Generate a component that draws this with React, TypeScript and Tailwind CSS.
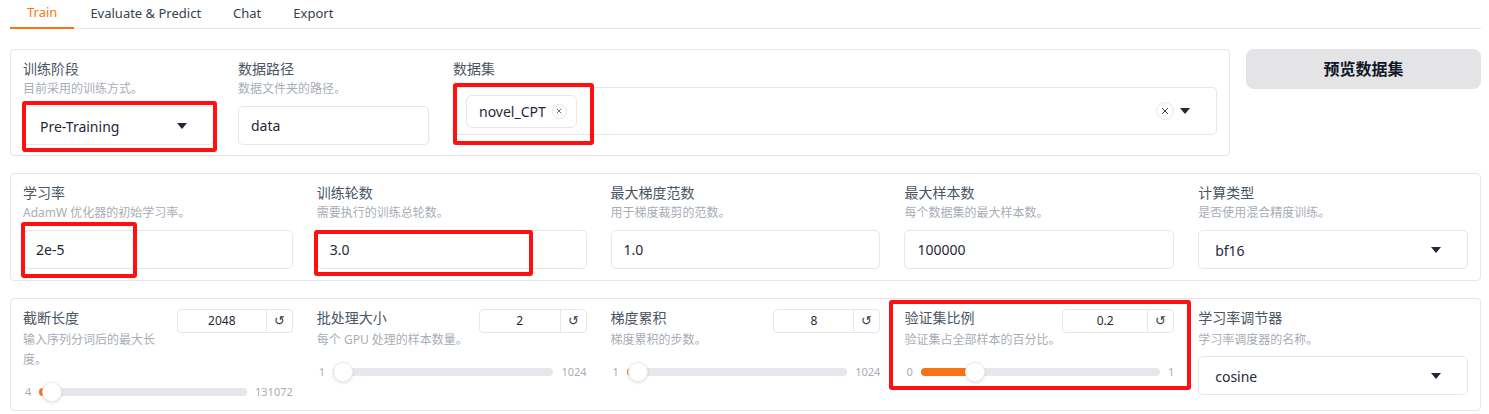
import React from 'react';

const FONT = { fontFamily: '"Noto Sans", "Noto Sans CJK SC", sans-serif' };

const Label: React.FC<{ text: string }> = ({ text }) => (
  <div className="text-[14px] leading-5 text-[#4b5563]">{text}</div>
);

const Info: React.FC<{ text: string }> = ({ text }) => (
  <div className="text-[12px] leading-5 text-[#a8adb6]">{text}</div>
);

const Caret = () => (
  <svg width="10" height="6" viewBox="0 0 10 6" className="shrink-0">
    <path d="M0 0 L10 0 L5 6 Z" fill="#1f2937" />
  </svg>
);

const CrossIcon: React.FC<{ size: number }> = ({ size }) => (
  <svg width={size} height={size} viewBox="0 0 8 8">
    <path d="M1 1 L7 7 M7 1 L1 7" stroke="#374151" strokeWidth="1" />
  </svg>
);

const TextBox: React.FC<{ value: string; dropdown?: boolean; className?: string }> = ({ value, dropdown, className }) => (
  <div
    className={`h-[39px] border border-[#e5e7eb] rounded-[5px] bg-white flex items-center justify-between pl-[12px] pr-[26px] text-[14px] text-[#1f2937] ${className ?? ''}`}
  >
    <span className={dropdown ? 'pl-[4px] pt-[2px]' : ''}>{value}</span>
    {dropdown && <Caret />}
  </div>
);

const NumberBox: React.FC<{ value: string; width: string }> = ({ value, width }) => (
  <div className={`mt-[1px] ${width} h-[24px] border border-[#e5e7eb] rounded-[4px] flex text-[12px] text-[#1f2937] shrink-0`}>
    <div className="flex-1 flex items-center justify-center">{value}</div>
    <div className="w-[26px] border-l border-[#e5e7eb] flex items-center justify-center text-[13px] text-[#374151]">↺</div>
  </div>
);

const Slider: React.FC<{ min: string; max: string; pct: number }> = ({ min, max, pct }) => (
  <div className="h-[20px] flex items-center gap-[8px] text-[11px] text-[#a8adb6]">
    <span className="pl-[2px]">{min}</span>
    <div className="relative flex-1 h-[20px]">
      <div className="absolute left-0 right-0 top-[6px] h-[8px] rounded-full bg-[#e5e7eb]" />
      <div
        className="absolute left-0 top-[6px] h-[8px] rounded-full bg-[#f97316]"
        style={{ width: `calc(${pct} * (100% - 20px) + 10px)` }}
      />
      <div
        className="absolute top-0 w-[20px] h-[20px] rounded-full bg-white border border-[#eeeeee] shadow-[0_1px_3px_rgba(0,0,0,0.15)]"
        style={{ left: `calc(${pct} * (100% - 20px))` }}
      />
    </div>
    <span>{max}</span>
  </div>
);

const SliderField: React.FC<{
  label: string;
  info: string;
  value: string;
  min: string;
  max: string;
  pct: number;
  boxWidth: string;
}> = ({ label, info, value, min, max, pct, boxWidth }) => (
  <div className="flex-1 min-w-0">
    <div className="flex items-start">
      <div className="flex-1 min-w-0">
        <Label text={label} />
        <div className="mt-[2px]">
          <Info text={info} />
        </div>
      </div>
      <NumberBox value={value} width={boxWidth} />
    </div>
    <div className="mt-[12px]">
      <Slider min={min} max={max} pct={pct} />
    </div>
  </div>
);

const Field: React.FC<{ label: string; info: string; value: string; dropdown?: boolean }> = ({ label, info, value, dropdown }) => (
  <div className="flex-1 min-w-0">
    <Label text={label} />
    <Info text={info} />
    <TextBox value={value} dropdown={dropdown} className="mt-[7px]" />
  </div>
);

const RedBox: React.FC<{ className: string }> = ({ className }) => (
  <div className={`absolute border-[4px] border-[#ff0f0f] rounded-[3px] pointer-events-none ${className}`} />
);

export default function App() {
  const tabs = ['Train', 'Evaluate & Predict', 'Chat', 'Export'];
  return (
    <div className="relative w-[1489px] h-[414px] bg-white overflow-hidden pl-[10px] pr-[8px]" style={FONT}>
      <div className="flex border-b border-[#e5e7eb] h-[29px]">
        {tabs.map((t, i) => (
          <div
            key={t}
            className={`h-[29px] flex items-center text-[13px] pb-[2px] ${
              i === 0 ? 'text-[#f97316] border-b-2 border-[#f97316] px-[17px]' : 'text-[#374151] px-[16px]'
            }`}
          >
            {t}
          </div>
        ))}
      </div>

      <div className="mt-[20px] flex gap-[16px] items-start">
        <div className="flex-1 border border-[#e5e7eb] rounded-[4px] pt-[9px] pb-[10px] px-[12px] flex gap-[24px]">
          <div className="w-[191px] shrink-0">
            <Label text="训练阶段" />
            <Info text="目前采用的训练方式。" />
            <TextBox value="Pre-Training" dropdown className="mt-[7px]" />
          </div>
          <div className="w-[191px] shrink-0">
            <Label text="数据路径" />
            <Info text="数据文件夹的路径。" />
            <TextBox value="data" className="mt-[7px]" />
          </div>
          <div className="flex-1 min-w-0">
            <Label text="数据集" />
            <div className="mt-[8px] h-[48px] border border-[#e5e7eb] rounded-[5px] flex items-center justify-between pl-[12px] pr-[26px]">
              <div className="h-[33px] w-[111px] border border-[#e5e7eb] rounded-[6px] flex items-center gap-[6px] pl-[12px] text-[14px] text-[#1f2937]">
                <span>novel_CPT</span>
                <span className="w-[15px] h-[15px] rounded-full border border-[#e5e7eb] flex items-center justify-center">
                  <CrossIcon size={6} />
                </span>
              </div>
              <div className="flex items-center gap-[6px]">
                <span className="w-[18px] h-[18px] rounded-full border border-[#e5e7eb] flex items-center justify-center">
                  <CrossIcon size={8} />
                </span>
                <Caret />
              </div>
            </div>
          </div>
        </div>
        <button className="w-[235px] h-[40px] rounded-[8px] bg-[#e4e4e7] text-[16px] font-bold text-[#111827]">预览数据集</button>
      </div>

      <div className="mt-[17px] border border-[#e5e7eb] rounded-[4px] pt-[9px] pb-[11px] px-[12px] flex gap-[24px]">
        <Field label="学习率" info="AdamW 优化器的初始学习率。" value="2e-5" />
        <Field label="训练轮数" info="需要执行的训练总轮数。" value="3.0" />
        <Field label="最大梯度范数" info="用于梯度裁剪的范数。" value="1.0" />
        <Field label="最大样本数" info="每个数据集的最大样本数。" value="100000" />
        <Field label="计算类型" info="是否使用混合精度训练。" value="bf16" dropdown />
      </div>

      <div className="mt-[17px] border border-[#e5e7eb] rounded-[4px] pt-[9px] pb-[8px] px-[12px] flex gap-[24px] items-start">
        <SliderField label="截断长度" info="输入序列分词后的最大长度。" value="2048" min="4" max="131072" pct={0.0156} boxWidth="w-[116px]" />
        <SliderField label="批处理大小" info="每个 GPU 处理的样本数量。" value="2" min="1" max="1024" pct={0.001} boxWidth="w-[108px]" />
        <SliderField label="梯度累积" info="梯度累积的步数。" value="8" min="1" max="1024" pct={0.007} boxWidth="w-[107px]" />
        <SliderField label="验证集比例" info="验证集占全部样本的百分比。" value="0.2" min="0" max="1" pct={0.2} boxWidth="w-[112px]" />
        <div className="flex-1 min-w-0">
          <Label text="学习率调节器" />
          <div className="mt-[2px]">
            <Info text="学习率调度器的名称。" />
          </div>
          <TextBox value="cosine" dropdown className="mt-[6px]" />
        </div>
      </div>

      <RedBox className="left-[22px] top-[101px] w-[195px] h-[51px]" />
      <RedBox className="left-[453px] top-[83px] w-[141px] h-[62px]" />
      <RedBox className="left-[21px] top-[222px] w-[116px] h-[56px]" />
      <RedBox className="left-[314px] top-[230px] w-[219px] h-[46px]" />
      <RedBox className="left-[889px] top-[300px] w-[302px] h-[90px]" />
    </div>
  );
}
